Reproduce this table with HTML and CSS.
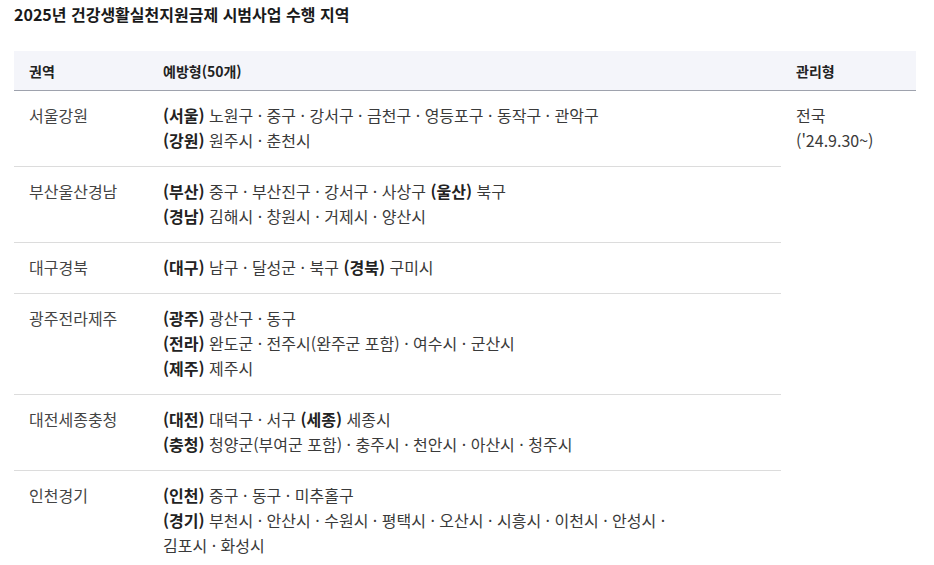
FILE: index.html
```html
<!DOCTYPE html>
<html lang="ko">
<head>
<meta charset="utf-8">
<link rel="stylesheet" href="styles.css">
</head>
<body>
<div class="wrap">
  <h2 class="title">2025년 건강생활실천지원금제 시범사업 수행 지역</h2>
  <table class="tbl">
    <colgroup>
      <col class="c1"><col class="c2"><col class="c3">
    </colgroup>
    <thead>
      <tr><th>권역</th><th>예방형(50개)</th><th>관리형</th></tr>
    </thead>
    <tbody>
      <tr>
        <td class="region">서울강원</td>
        <td><b>(서울)</b> 노원구 · 중구 · 강서구 · 금천구 · 영등포구 · 동작구 · 관악구<br><b>(강원)</b> 원주시 · 춘천시</td>
        <td class="mgmt" rowspan="6">전국<br>('24.9.30~)</td>
      </tr>
      <tr>
        <td class="region">부산울산경남</td>
        <td><b>(부산)</b> 중구 · 부산진구 · 강서구 · 사상구 <b>(울산)</b> 북구<br><b>(경남)</b> 김해시 · 창원시 · 거제시 · 양산시</td>
      </tr>
      <tr>
        <td class="region">대구경북</td>
        <td><b>(대구)</b> 남구 · 달성군 · 북구 <b>(경북)</b> 구미시</td>
      </tr>
      <tr>
        <td class="region">광주전라제주</td>
        <td><b>(광주)</b> 광산구 · 동구<br><b>(전라)</b> 완도군 · 전주시(완주군 포함) · 여수시 · 군산시<br><b>(제주)</b> 제주시</td>
      </tr>
      <tr>
        <td class="region">대전세종충청</td>
        <td><b>(대전)</b> 대덕구 · 서구 <b>(세종)</b> 세종시<br><b>(충청)</b> 청양군(부여군 포함) · 충주시 · 천안시 · 아산시 · 청주시</td>
      </tr>
      <tr>
        <td class="region">인천경기</td>
        <td><b>(인천)</b> 중구 · 동구 · 미추홀구<br><b>(경기)</b> 부천시 · 안산시 · 수원시 · 평택시 · 오산시 · 시흥시 · 이천시 · 안성시 ·<br>김포시 · 화성시</td>
      </tr>
    </tbody>
  </table>
</div>
</body>
</html>
```
FILE: styles.css
```css
html, body {
  margin: 0;
  padding: 0;
  background: #fff;
}
body {
  font-family: "Noto Sans CJK KR", "Noto Sans", sans-serif;
  color: #333;
}
.wrap {
  padding: 0 18px 0 14px;
}
.title {
  margin: 0;
  padding-top: 2px;
  padding-bottom: 1px;
  font-size: 16px;
  line-height: 24px;
  font-weight: 700;
  color: #1a1a1a;
}
.tbl {
  margin-top: 24px;
  width: 902px;
  border-collapse: collapse;
  table-layout: fixed;
  font-size: 14px;
}
.c1 { width: 149px; }
.c2 { width: 618px; }
.c3 { width: 135px; }
.tbl th {
  background: #f4f5fa;
  border-bottom: 1px solid #9ea2ad;
  text-align: left;
  font-weight: 700;
  color: #222;
  height: 39px;
  padding: 0 15px;
  line-height: 20px;
}
.tbl th:nth-child(2) { padding-left: 0; }
.tbl td {
  padding: 12px 15px 13px 15px;
  font-size: 16px;
  line-height: 25px;
  vertical-align: top;
  border-bottom: 1px solid #dcdcdc;
  color: #3a3a3a;
}
.tbl td:nth-child(2) { padding-left: 0; }
.tbl td b {
  font-weight: 700;
  color: #222;
}
.tbl td.mgmt {
  border-bottom: none;
}
.tbl td.region {
  color: #444;
}
```
